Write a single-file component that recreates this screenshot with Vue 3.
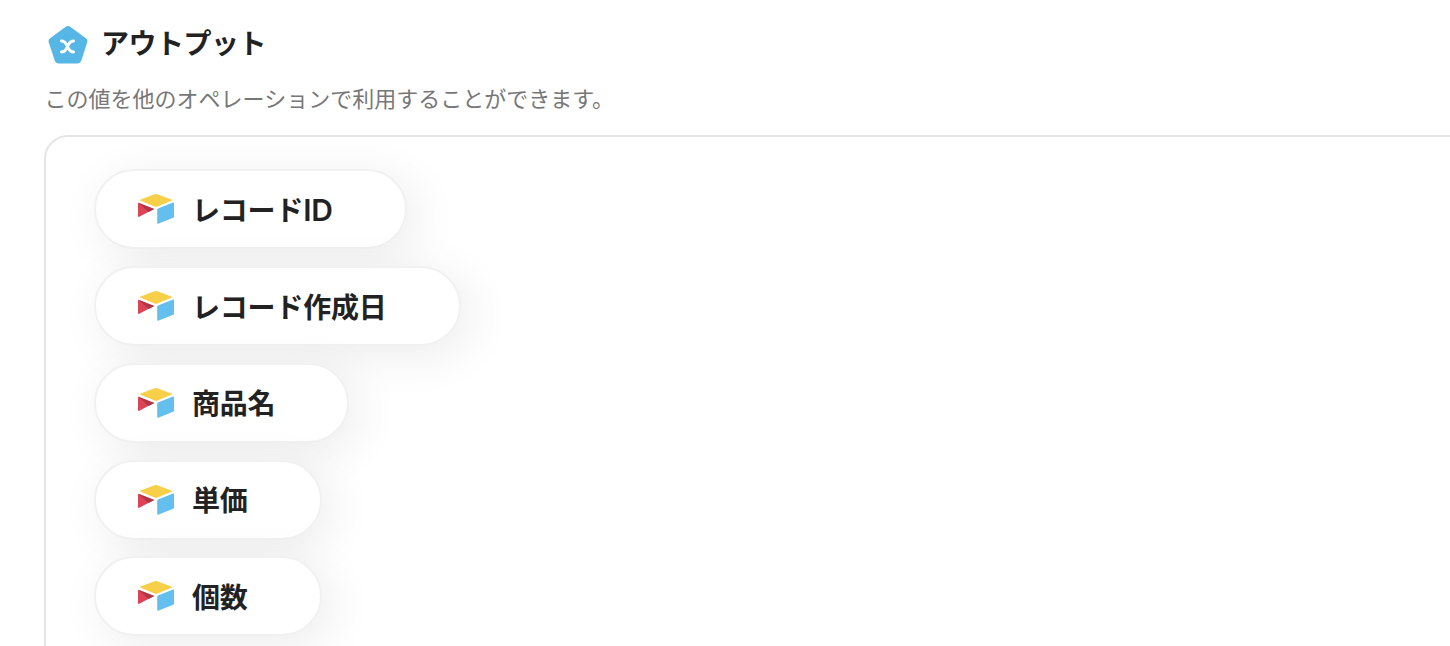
<template>
  <section class="output">
    <header class="heading">
      <svg class="badge" width="40" height="40" viewBox="0 0 40 40">
        <path d="M20 4.8 L35.6 16.2 L29.6 34.6 H10.4 L4.4 16.2 Z" fill="#56b7e6" stroke="#56b7e6" stroke-width="7.6" stroke-linejoin="round"/>
        <path d="M13.4 16 Q16.4 16 18 18.8 L21 24.2 Q22.6 27 25.6 27 M25.6 16 Q22.6 16 21 18.8 L18 24.2 Q16.4 27 13.4 27" fill="none" stroke="#fff" stroke-width="2.8" stroke-linecap="round"/>
      </svg>
      <h2>アウトプット</h2>
    </header>
    <p class="description">この値を他のオペレーションで利用することができます。</p>
    <div class="panel">
      <div v-for="item in items" :key="item.label" class="pill">
        <svg class="logo" width="38" height="32" viewBox="0 0 38 32">
          <path d="M3.6 6.4 L17.6 1.3 Q19 .8 20.4 1.3 L34.4 6.4 Q35.6 7 34.4 7.7 L20.4 13.6 Q19 14.2 17.6 13.6 L3.6 7.7 Q2.4 7 3.6 6.4 Z" fill="#f8cf48"/>
          <path d="M20.2 16.6 Q20.2 15.8 21 15.5 L36 9.6 Q37 9.3 37 10.2 V23.7 Q37 24.5 36.2 24.8 L21.2 30.7 Q20.2 31 20.2 30 Z" fill="#64bfee"/>
          <path d="M1 10.6 Q1 9.6 2 9.9 L17.2 16.1 L2.2 23.8 Q1 24.3 1 23.2 Z" fill="#dc4355"/>
          <path d="M1.4 9.8 L17.2 16.1 L11.6 18.9 Z" fill="#b23546"/>
        </svg>
        <span class="label">{{ item.label }}<span v-if="item.latin" class="latin">{{ item.latin }}</span></span>
      </div>
    </div>
  </section>
</template>

<script setup>
const items = [
  { label: 'レコード', latin: 'ID' },
  { label: 'レコード作成日' },
  { label: '商品名' },
  { label: '単価' },
  { label: '個数' }
]
</script>

<style>
body { margin: 0; background: #fff; overflow: hidden; }
</style>

<style scoped>
.output { box-sizing: border-box; height: 646px; padding: 24px 0 0 44px; overflow: hidden; color: #222; font-family: "Noto Sans CJK JP", sans-serif; }
.heading { display: flex; align-items: center; height: 40px; }
.badge { flex: none; margin: 1px 0 0 4px; }
h2 { margin: -4px 0 0 13px; font-size: 28px; line-height: 40px; font-weight: 700; letter-spacing: -.5px; }
.description { margin: 17px 0 0 .6px; font-size: 22px; line-height: 32px; color: #777; }
.panel { display: flex; flex-direction: column; align-items: flex-start; gap: 16.8px; box-sizing: border-box; width: 1500px; height: 700px; margin-top: 22px; padding: 32.3px 48px; border: 2px solid #e5e5e5; border-radius: 24px; }
.pill { display: flex; align-items: center; flex: none; box-sizing: border-box; height: 80px; padding: 0 72px 0 41px; border: 2px solid #f1f1f1; border-radius: 40px; background: #fff; box-shadow: 9px 9px 48px rgba(0, 0, 0, .08); font-size: 28px; line-height: 40px; font-weight: 700; white-space: nowrap; }
.logo { flex: none; margin-right: 17px; }
.label { margin-top: -1px; letter-spacing: -.2px; }
.latin { font-family: Inter, sans-serif; font-size: 30px; line-height: 1; font-weight: 600; }
</style>
